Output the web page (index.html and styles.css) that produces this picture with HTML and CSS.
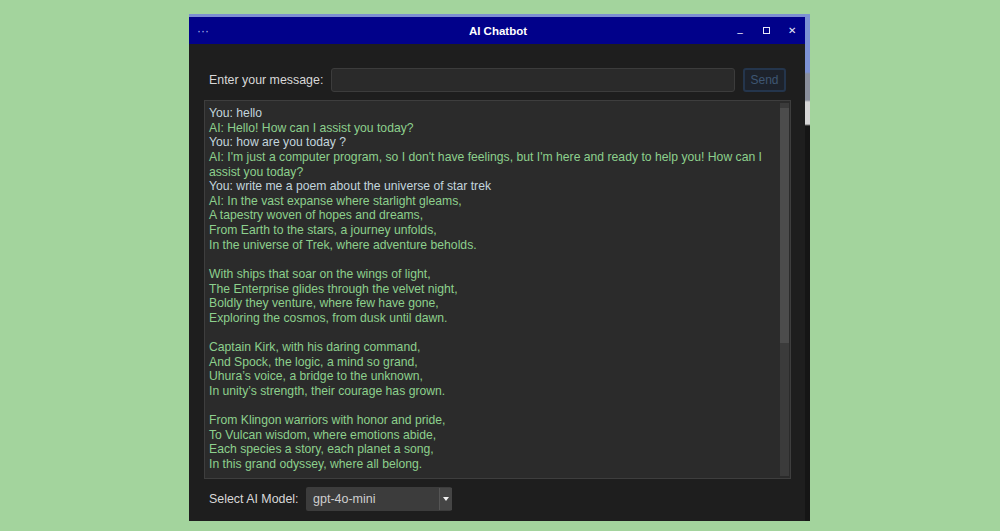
FILE: index.html
```html
<!DOCTYPE html>
<html>
<head>
<meta charset="utf-8">
<link rel="stylesheet" href="styles.css">
</head>
<body>
<div class="window">
  <div class="frame">
    <div class="titlebar">
      <span class="dots">···</span>
      <span class="title">AI Chatbot</span>
      <div class="controls">
        <span class="ctl min">–</span>
        <span class="ctl max"></span>
        <span class="ctl close">✕</span>
      </div>
    </div>
    <div class="body">
      <div class="input-row">
        <label class="label">Enter your message:</label>
        <div class="input"></div>
        <div class="send">Send</div>
      </div>
      <div class="chat">
        <div class="chat-text">
          <div class="you">You: hello</div>
          <div class="ai">AI: Hello! How can I assist you today?</div>
          <div class="you">You: how are you today ?</div>
          <div class="ai">AI: I'm just a computer program, so I don't have feelings, but I'm here and ready to help you! How can I assist you today?</div>
          <div class="you">You: write me a poem about the universe of star trek</div>
          <div class="ai">AI: In the vast expanse where starlight gleams,<br>A tapestry woven of hopes and dreams,<br>From Earth to the stars, a journey unfolds,<br>In the universe of Trek, where adventure beholds.<br><br>With ships that soar on the wings of light,<br>The Enterprise glides through the velvet night,<br>Boldly they venture, where few have gone,<br>Exploring the cosmos, from dusk until dawn.<br><br>Captain Kirk, with his daring command,<br>And Spock, the logic, a mind so grand,<br>Uhura’s voice, a bridge to the unknown,<br>In unity’s strength, their courage has grown.<br><br>From Klingon warriors with honor and pride,<br>To Vulcan wisdom, where emotions abide,<br>Each species a story, each planet a song,<br>In this grand odyssey, where all belong.</div>
        </div>
        <div class="scrollbar"><div class="thumb"></div></div>
      </div>
      <div class="model-row">
        <span class="label">Select AI Model:</span>
        <div class="select">
          <span class="select-value">gpt-4o-mini</span>
          <span class="select-arrow"><span class="arrow-mark"></span></span>
        </div>
      </div>
    </div>
  </div>
  <div class="edge"></div>
</div>
</body>
</html>
```
FILE: styles.css
```css
html, body {
  margin: 0;
  padding: 0;
}
body {
  background: #a3d49d;
  width: 1000px;
  height: 531px;
  overflow: hidden;
  font-family: "Liberation Sans", Arial, sans-serif;
}
.window {
  margin: 14px 0 0 189px;
  width: 621px;
  height: 507px;
  display: flex;
}
.frame {
  width: 616px;
  display: flex;
  flex-direction: column;
  border-top: 3px solid #7d8fd2;
}
.edge {
  width: 5px;
  background: linear-gradient(#7d92d4 0, #7d92d4 58px, #8a8f9c 60px, #8a8f9c 86px, #d6d6d6 88px, #d6d6d6 110px, #151515 112px, #151515 100%);
}
.titlebar {
  height: 27px;
  background: #01018a;
  display: flex;
  align-items: center;
  color: #fff;
  padding: 0 8px 0 8px;
}
.dots {
  font-size: 12px;
  color: #a9b0e8;
  width: 62px;
}
.title {
  flex: 1;
  text-align: center;
  font-weight: bold;
  font-size: 11.5px;
  padding-left: 2px;
}
.controls {
  display: flex;
  align-items: center;
  width: 62px;
  justify-content: space-between;
}
.ctl {
  font-size: 10px;
  color: #e8e8f8;
  width: 10px;
  text-align: center;
}
.max {
  width: 7px;
  height: 7px;
  border: 1.5px solid #e8e8f8;
  box-sizing: border-box;
  margin: 0 2px;
}
.min {
  padding-top: 3px;
}
.close {
  font-size: 9.5px;
}
.body {
  flex: 1;
  background: #1e1e1e;
  display: flex;
  flex-direction: column;
  padding: 24px 0 0 15px;
}
.input-row {
  display: flex;
  align-items: center;
  height: 24px;
}
.label {
  color: #d8d8d8;
  font-size: 12.4px;
  padding-left: 5px;
  white-space: nowrap;
  box-sizing: border-box;
}
.input-row .label {
  width: 127px;
}
.input {
  width: 404px;
  height: 24px;
  box-sizing: border-box;
  background: #2a2a2a;
  border: 1px solid #3c3c3c;
  border-radius: 3px;
}
.send {
  margin-left: 8px;
  width: 43px;
  height: 24px;
  box-sizing: border-box;
  border: 2px solid #24354c;
  border-radius: 3px;
  background: #1d222b;
  color: #3e5673;
  font-size: 12px;
  display: flex;
  align-items: center;
  justify-content: center;
}
.chat {
  margin-top: 8px;
  width: 587px;
  height: 379px;
  box-sizing: border-box;
  background: #2b2b2b;
  border: 1px solid #3e3e3e;
  display: flex;
}
.chat-text {
  flex: 1;
  padding: 5px 0 0 4px;
  font-size: 12.2px;
  line-height: 14.63px;
  overflow: hidden;
}
.you {
  color: #c2d5dd;
}
.ai {
  color: #8dd08d;
}
.scrollbar {
  width: 9px;
  margin: 2px 1px 2px 0;
  background: #3b3b3b;
  display: flex;
  flex-direction: column;
}
.thumb {
  height: 235px;
  margin-top: 5px;
  background: #4c4c4c;
}
.model-row {
  display: flex;
  align-items: center;
  margin-top: 8px;
  height: 24px;
}
.model-row .label {
  width: 102px;
}
.select {
  width: 146px;
  height: 24px;
  background: #3c3c3c;
  display: flex;
  border-radius: 2px;
}
.select-value {
  flex: 1;
  color: #cfcfcf;
  font-size: 12.5px;
  padding-left: 7px;
  display: flex;
  align-items: center;
}
.select-arrow {
  width: 12px;
  margin: 1px 0 1px 0;
  background: #454545;
  border-left: 1px solid #555;
  display: flex;
  align-items: center;
  justify-content: center;
}
.arrow-mark {
  width: 0;
  height: 0;
  border-left: 3px solid transparent;
  border-right: 3px solid transparent;
  border-top: 4px solid #f2f2f2;
}
```
